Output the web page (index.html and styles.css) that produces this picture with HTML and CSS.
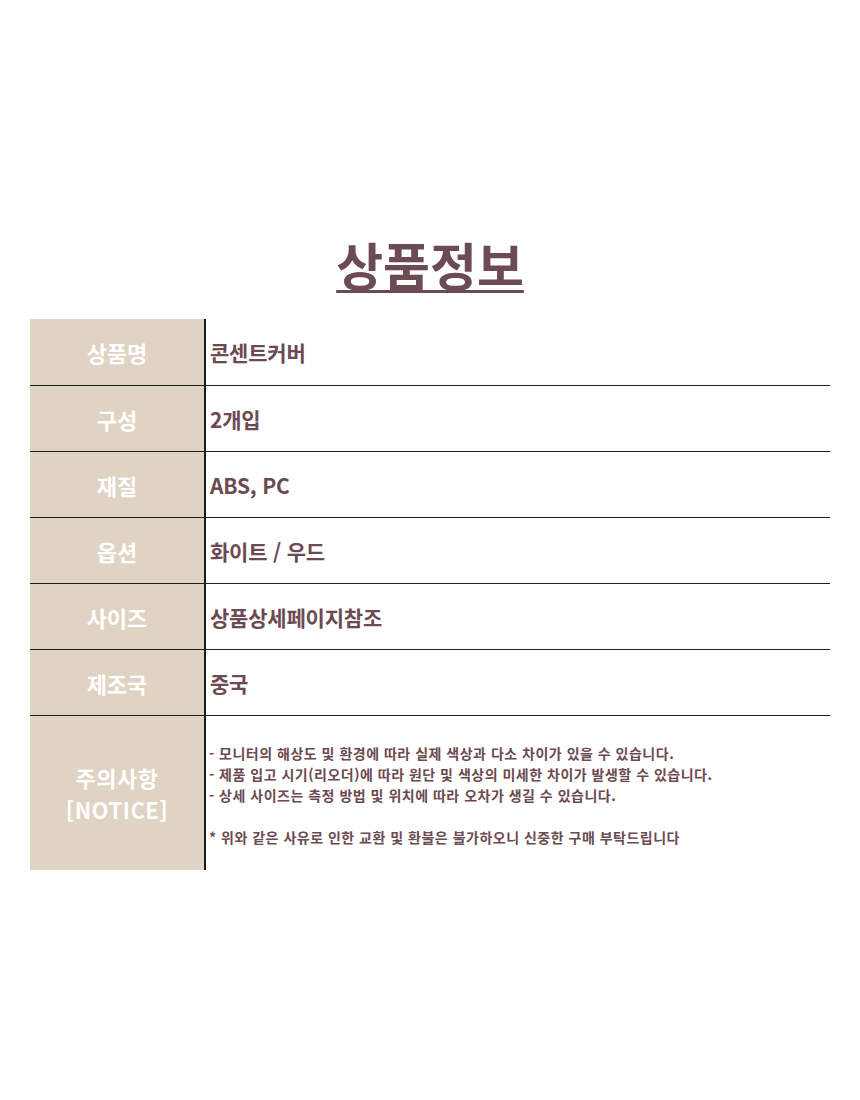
FILE: index.html
```html
<!DOCTYPE html>
<html lang="ko">
<head>
<meta charset="utf-8">
<title>상품정보</title>
<link rel="stylesheet" href="styles.css">
</head>
<body>
<main class="page">
  <h1 class="title">상품정보</h1>
  <section class="info">
    <div class="row"><div class="label">상품명</div><div class="value">콘센트커버</div></div>
    <div class="row"><div class="label">구성</div><div class="value">2개입</div></div>
    <div class="row"><div class="label">재질</div><div class="value">ABS, PC</div></div>
    <div class="row"><div class="label">옵션</div><div class="value">화이트 / 우드</div></div>
    <div class="row"><div class="label">사이즈</div><div class="value">상품상세페이지참조</div></div>
    <div class="row"><div class="label">제조국</div><div class="value">중국</div></div>
    <div class="row notice-row">
      <div class="label">주의사항<br>[NOTICE]</div>
      <div class="value notice">
        <p>- 모니터의 해상도 및 환경에 따라 실제 색상과 다소 차이가 있을 수 있습니다.<br>- 제품 입고 시기(리오더)에 따라 원단 및 색상의 미세한 차이가 발생할 수 있습니다.<br>- 상세 사이즈는 측정 방법 및 위치에 따라 오차가 생길 수 있습니다.</p>
        <p>* 위와 같은 사유로 인한 교환 및 환불은 불가하오니 신중한 구매 부탁드립니다</p>
      </div>
    </div>
  </section>
</main>
</body>
</html>
```
FILE: styles.css
```css
* { box-sizing: border-box; }
html, body { margin: 0; padding: 0; background: #fff; }
body {
  font-family: "Noto Sans CJK KR", "Noto Sans", sans-serif;
  color: #6b4a51;
}
.page {
  width: 860px;
  padding: 230px 30px 0;
}
.title {
  margin: 0 0 21px;
  text-align: center;
  font-size: 51px;
  line-height: 68px;
  font-weight: 700;
  text-decoration: underline;
  text-decoration-thickness: 3px;
  text-underline-offset: 4px;
  color: #6d4b52;
}
.info {
  width: 800px;
}
.row {
  display: grid;
  grid-template-columns: 174px 1fr;
  height: 66px;
  border-bottom: 1px solid #1e1e1e;
}
.row:first-child { height: 67px; }
.row.notice-row {
  height: 154px;
  border-bottom: none;
}
.label {
  background: #dfd3c3;
  color: #fff;
  font-size: 22px;
  font-weight: 700;
  display: flex;
  align-items: center;
  justify-content: center;
  text-align: center;
  border-right: 2px solid #1a1a1a;
  margin-right: -2px;
  position: relative;
}
.notice-row .label {
  font-size: 22px;
  line-height: 32px;
  letter-spacing: 0.5px;
}
.value {
  display: flex;
  align-items: center;
  padding-left: 6px;
  font-size: 21px;
  font-weight: 700;
  letter-spacing: -0.2px;
}
.value.notice {
  flex-direction: column;
  align-items: flex-start;
  justify-content: center;
  padding-left: 5px;
  padding-top: 4px;
  font-size: 14px;
  line-height: 21px;
  font-weight: 700;
  letter-spacing: 0.5px;
}
.notice p { margin: 0; }
.notice p + p { margin-top: 21px; }
```
